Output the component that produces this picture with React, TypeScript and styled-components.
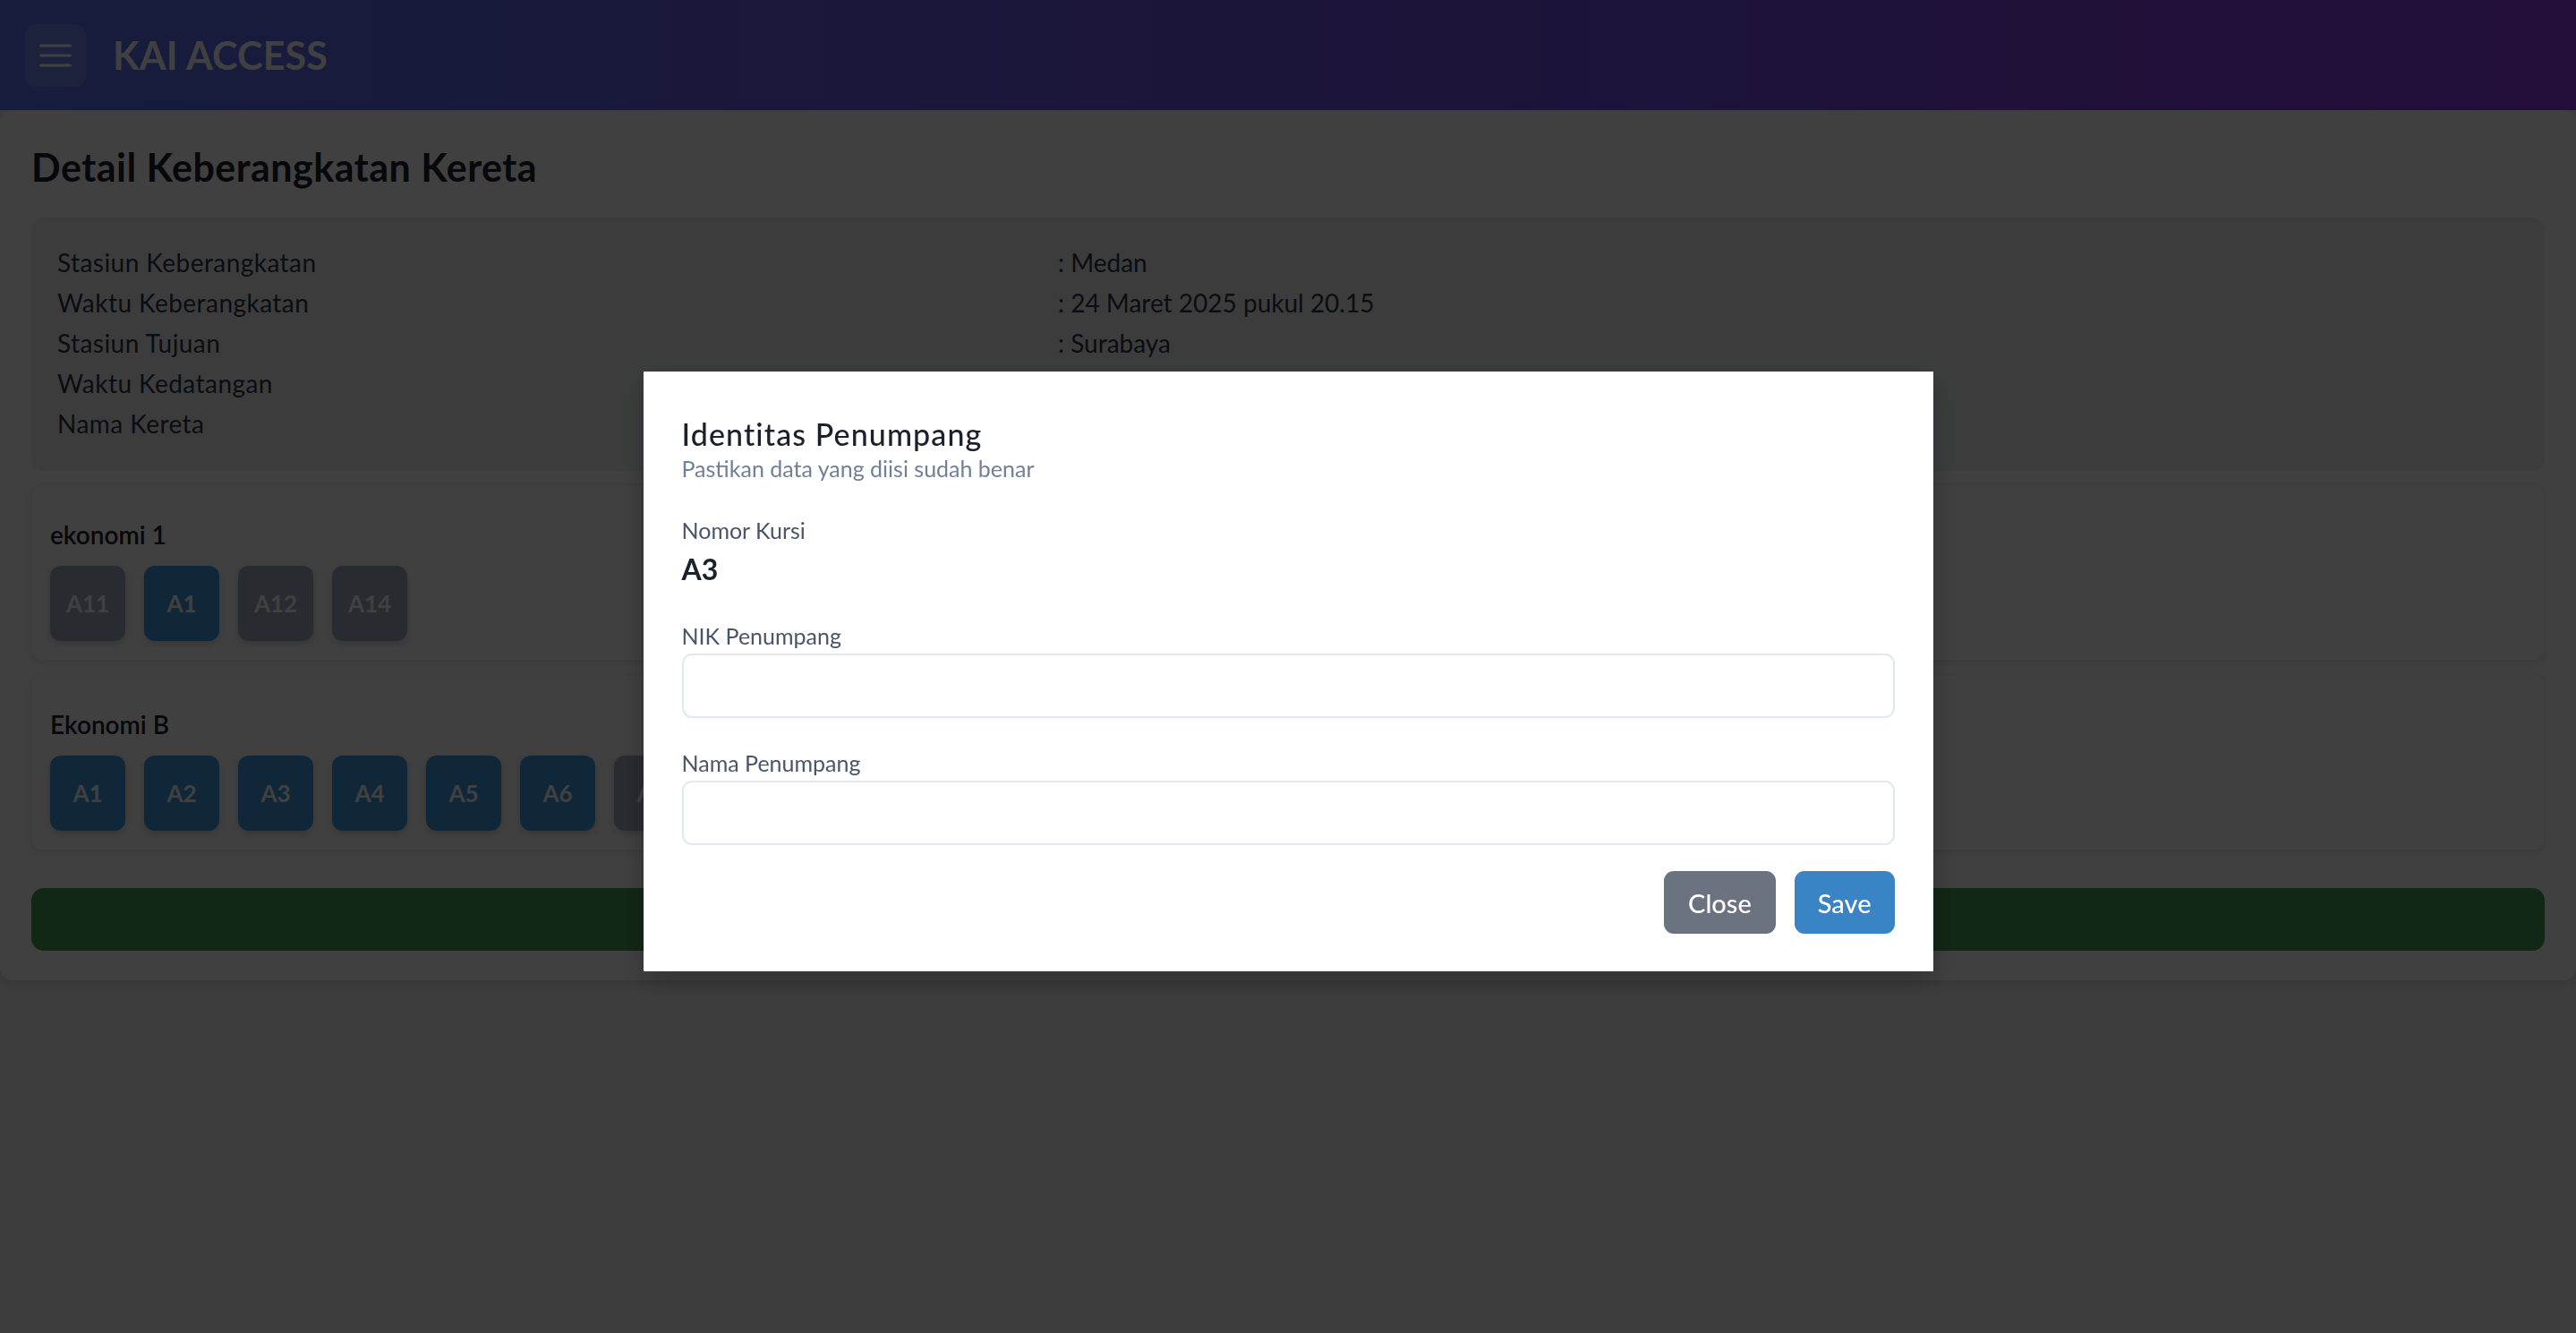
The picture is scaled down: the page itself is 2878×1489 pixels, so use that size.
import React from "react";
import styled, { createGlobalStyle } from "styled-components";

const GlobalStyle = createGlobalStyle`
  html, body { margin: 0; padding: 0; }
  body {
    background: #f3f4f6;
    font-family: Lato, "Open Sans", "Noto Sans", sans-serif;
    color: #1a202c;
  }
  *, *::before, *::after { box-sizing: border-box; }
`;

const Page = styled.div`
  min-height: 100vh;
  background: #f3f4f6;
`;

const Navbar = styled.header`
  height: 123px;
  display: flex;
  align-items: center;
  gap: 30px;
  padding-left: 28px;
  background: linear-gradient(90deg, #5a74ee 0%, #6e56e8 45%, #8a3ae2 100%);
`;

const MenuButton = styled.button`
  width: 68px;
  height: 70px;
  border: none;
  border-radius: 12px;
  background: rgba(255, 255, 255, 0.14);
  display: flex;
  align-items: center;
  justify-content: center;
  padding: 0;
`;

const Brand = styled.h1`
  margin: 0;
  font-size: 43px;
  font-weight: 700;
  color: #ffffff;
  letter-spacing: 0.2px;
`;

const Main = styled.main`
  background: #ffffff;
  border-radius: 14px;
  box-shadow: 0 4px 14px rgba(0, 0, 0, 0.12);
  padding: 35px 35px 33px;
  display: flex;
  flex-direction: column;
`;

const PageTitle = styled.h2`
  margin: 0 0 27px;
  font-size: 43px;
  line-height: 58px;
  font-weight: 700;
  letter-spacing: 0.5px;
  color: #1a202c;
`;

const InfoCard = styled.section`
  background: #eef0f3;
  border-radius: 14px;
  padding: 28px 29px 30px;
  display: grid;
  grid-template-columns: 1118px 1fr;
  font-size: 28px;
  line-height: 45px;
  color: #2d3748;
`;

const InfoLabel = styled.div`
  letter-spacing: 0.45px;
`;
const InfoValue = styled.div``;

const SeatCard = styled.section`
  margin-top: 15px;
  background: #ffffff;
  border: 1px solid rgba(0, 0, 0, 0.05);
  border-radius: 12px;
  box-shadow: 0 3px 8px rgba(0, 0, 0, 0.1);
  padding: 34px 20px 21px;
`;

const SeatTitle = styled.h3`
  margin: 0 0 14px;
  font-size: 28px;
  line-height: 42px;
  font-weight: 600;
  color: #1a202c;
`;

const SeatRow = styled.div`
  display: flex;
  flex-wrap: wrap;
  gap: 21px;
`;

const Seat = styled.button<{ $available: boolean }>`
  width: 84px;
  height: 84px;
  border: none;
  border-radius: 12px;
  background: ${(p) => (p.$available ? "#4299e1" : "#a0aec0")};
  color: #ffffff;
  font-family: inherit;
  font-size: 26px;
  font-weight: 700;
  box-shadow: 0 3px 8px rgba(0, 0, 0, 0.18);
  padding: 0;
`;

const SubmitBar = styled.button`
  margin-top: 42px;
  height: 70px;
  border: none;
  border-radius: 14px;
  background: #4c9c5a;
  color: #ffffff;
  font-family: inherit;
  font-size: 28px;
  font-weight: 700;
`;

const Overlay = styled.div`
  position: fixed;
  inset: 0;
  background: rgba(0, 0, 0, 0.75);
  display: flex;
  justify-content: center;
  align-items: flex-start;
  padding-top: 415px;
`;

const Dialog = styled.div`
  width: 1441px;
  background: #ffffff;
  padding: 47px 43px 42px 43px;
  box-shadow: 0 10px 30px rgba(0, 0, 0, 0.25);
  display: flex;
  flex-direction: column;
`;

const DialogTitle = styled.h2`
  margin: 0;
  font-size: 34px;
  line-height: 45px;
  font-weight: 500;
  letter-spacing: 1.1px;
  color: #1a202c;
`;

const DialogSubtitle = styled.p`
  margin: 0;
  font-size: 25px;
  line-height: 32px;
  color: #718096;
`;

const Field = styled.div<{ $gap: number }>`
  margin-top: ${(p) => p.$gap}px;
  display: flex;
  flex-direction: column;
  gap: 2px;
`;

const FieldLabel = styled.label`
  font-size: 25px;
  line-height: 36px;
  color: #4a5568;
`;

const SeatNumber = styled.div`
  margin-top: 6px;
  font-size: 32px;
  line-height: 40px;
  font-weight: 700;
  color: #1a202c;
`;

const TextInput = styled.input`
  height: 72px;
  border: 2px solid #e2e8f0;
  border-radius: 11px;
  padding: 0 24px;
  font-family: inherit;
  font-size: 28px;
  outline: none;
`;

const Actions = styled.div`
  margin-top: 29px;
  display: flex;
  justify-content: flex-end;
  gap: 21px;
`;

const ActionButton = styled.button<{ $variant: "gray" | "blue" }>`
  height: 70px;
  padding: 0 ${(p) => (p.$variant === "gray" ? 27 : 26)}px;
  border: none;
  border-radius: 11px;
  background: ${(p) => (p.$variant === "gray" ? "#6b7280" : "#3a83c5")};
  color: #ffffff;
  font-family: inherit;
  font-size: 29px;
  font-weight: 500;
`;

const MenuIcon = () => (
  <svg width="36" height="26" viewBox="0 0 36 26" fill="none">
    <path d="M1.5 2h33M1.5 13h33M1.5 24h33" stroke="#ffffff" strokeWidth="3" strokeLinecap="round" />
  </svg>
);

const info: [string, string][] = [
  ["Stasiun Keberangkatan", ": Medan"],
  ["Waktu Keberangkatan", ": 24 Maret 2025 pukul 20.15"],
  ["Stasiun Tujuan", ": Surabaya"],
  ["Waktu Kedatangan", ": 25 Maret 2025 pukul 10.30"],
  ["Nama Kereta", ": Argo Bromo"],
];

const coaches: { name: string; seats: [string, boolean][] }[] = [
  {
    name: "ekonomi 1",
    seats: [
      ["A11", false],
      ["A1", true],
      ["A12", false],
      ["A14", false],
    ],
  },
  {
    name: "Ekonomi B",
    seats: [
      ["A1", true],
      ["A2", true],
      ["A3", true],
      ["A4", true],
      ["A5", true],
      ["A6", true],
      ["A7", false],
      ["A8", false],
      ["A9", true],
      ["A10", true],
    ],
  },
];

export default function App() {
  return (
    <Page>
      <GlobalStyle />
      <Navbar>
        <MenuButton aria-label="menu">
          <MenuIcon />
        </MenuButton>
        <Brand>KAI ACCESS</Brand>
      </Navbar>
      <Main>
        <PageTitle>Detail Keberangkatan Kereta</PageTitle>
        <InfoCard>
          {info.map(([label, value]) => (
            <React.Fragment key={label}>
              <InfoLabel>{label}</InfoLabel>
              <InfoValue>{value}</InfoValue>
            </React.Fragment>
          ))}
        </InfoCard>
        {coaches.map((coach) => (
          <SeatCard key={coach.name}>
            <SeatTitle>{coach.name}</SeatTitle>
            <SeatRow>
              {coach.seats.map(([seat, available]) => (
                <Seat key={seat} $available={available}>
                  {seat}
                </Seat>
              ))}
            </SeatRow>
          </SeatCard>
        ))}
        <SubmitBar aria-label="pesan" />
      </Main>
      <Overlay>
        <Dialog>
          <DialogTitle>Identitas Penumpang</DialogTitle>
          <DialogSubtitle>Pastikan data yang diisi sudah benar</DialogSubtitle>
          <Field $gap={35}>
            <FieldLabel>Nomor Kursi</FieldLabel>
          </Field>
          <SeatNumber>A3</SeatNumber>
          <Field $gap={36}>
            <FieldLabel>NIK Penumpang</FieldLabel>
            <TextInput />
          </Field>
          <Field $gap={32}>
            <FieldLabel>Nama Penumpang</FieldLabel>
            <TextInput />
          </Field>
          <Actions>
            <ActionButton $variant="gray">Close</ActionButton>
            <ActionButton $variant="blue">Save</ActionButton>
          </Actions>
        </Dialog>
      </Overlay>
    </Page>
  );
}
